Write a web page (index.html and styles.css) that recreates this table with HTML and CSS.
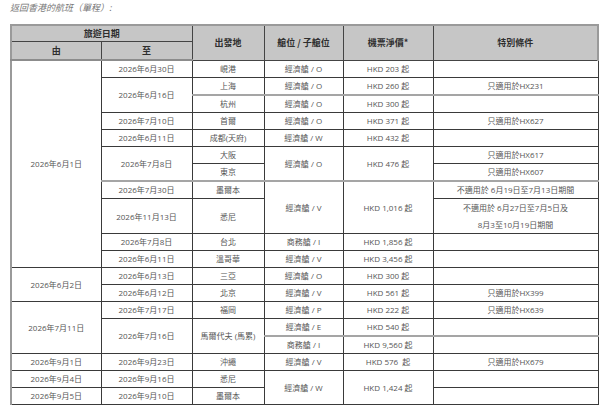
FILE: index.html
```html
<!DOCTYPE html>
<html lang="zh-Hant">
<head>
<meta charset="utf-8">
<title>返回香港的航班</title>
<link rel="stylesheet" href="styles.css">
</head>
<body>
<p class="title">返回香港的航班（單程）:</p>
<table class="fares">
  <colgroup>
    <col class="c1"><col class="c2"><col class="c3"><col class="c4"><col class="c5"><col class="c6">
  </colgroup>
  <thead>
    <tr class="h1">
      <th colspan="2">旅遊日期</th>
      <th rowspan="2">出發地</th>
      <th rowspan="2">艙位 / 子艙位</th>
      <th rowspan="2">機票淨價*</th>
      <th rowspan="2" class="last">特別條件</th>
    </tr>
    <tr class="h2">
      <th>由</th>
      <th>至</th>
    </tr>
  </thead>
  <tbody>
    <tr>
      <td rowspan="11" class="first">2026年6月1日</td>
      <td>2026年6月30日</td>
      <td>峴港</td>
      <td>經濟艙 / O</td>
      <td>HKD 203 起</td>
      <td></td>
    </tr>
    <tr>
      <td rowspan="2">2026年6月16日</td>
      <td>上海</td>
      <td>經濟艙 / O</td>
      <td>HKD 260 起</td>
      <td>只適用於HX231</td>
    </tr>
    <tr class="g">
      <td>杭州</td>
      <td>經濟艙 / O</td>
      <td>HKD 300 起</td>
      <td></td>
    </tr>
    <tr>
      <td>2026年7月10日</td>
      <td>首爾</td>
      <td>經濟艙 / O</td>
      <td>HKD 371 起</td>
      <td>只適用於HX627</td>
    </tr>
    <tr>
      <td>2026年6月11日</td>
      <td>成都(天府)</td>
      <td>經濟艙 / W</td>
      <td>HKD 432 起</td>
      <td></td>
    </tr>
    <tr>
      <td rowspan="2">2026年7月8日</td>
      <td>大阪</td>
      <td rowspan="2">經濟艙 / O</td>
      <td rowspan="2">HKD 476 起</td>
      <td>只適用於HX617</td>
    </tr>
    <tr>
      <td>東京</td>
      <td>只適用於HX607</td>
    </tr>
    <tr class="g">
      <td>2026年7月30日</td>
      <td>墨爾本</td>
      <td rowspan="2">經濟艙 / V</td>
      <td rowspan="2">HKD 1,016 起</td>
      <td>不適用於 6月19日至7月13日期間</td>
    </tr>
    <tr class="tall">
      <td>2026年11月13日</td>
      <td>悉尼</td>
      <td>不適用於 6月27日至7月5日及<br>8月3至10月19日期間</td>
    </tr>
    <tr>
      <td>2026年7月8日</td>
      <td>台北</td>
      <td>商務艙 / I</td>
      <td>HKD 1,856 起</td>
      <td></td>
    </tr>
    <tr>
      <td>2026年6月11日</td>
      <td>溫哥華</td>
      <td>經濟艙 / V</td>
      <td>HKD 3,456 起</td>
      <td></td>
    </tr>
    <tr>
      <td rowspan="2" class="first">2026年6月2日</td>
      <td>2026年6月13日</td>
      <td>三亞</td>
      <td>經濟艙 / O</td>
      <td>HKD 300 起</td>
      <td></td>
    </tr>
    <tr>
      <td>2026年6月12日</td>
      <td>北京</td>
      <td>經濟艙 / V</td>
      <td>HKD 561 起</td>
      <td>只適用於HX399</td>
    </tr>
    <tr>
      <td rowspan="3" class="first">2026年7月11日</td>
      <td>2026年7月17日</td>
      <td>福岡</td>
      <td>經濟艙 / P</td>
      <td>HKD 222 起</td>
      <td>只適用於HX639</td>
    </tr>
    <tr>
      <td rowspan="2">2026年7月16日</td>
      <td rowspan="2">馬爾代夫 (馬累)</td>
      <td>經濟艙 / E</td>
      <td>HKD 540 起</td>
      <td></td>
    </tr>
    <tr class="g">
      <td>商務艙 / I</td>
      <td>HKD 9,560 起</td>
      <td></td>
    </tr>
    <tr>
      <td class="first">2026年9月1日</td>
      <td>2026年9月23日</td>
      <td>沖繩</td>
      <td>經濟艙 / V</td>
      <td>HKD 576&nbsp; 起</td>
      <td>只適用於HX679</td>
    </tr>
    <tr>
      <td class="first">2026年9月4日</td>
      <td>2026年9月16日</td>
      <td>悉尼</td>
      <td rowspan="2">經濟艙 / W</td>
      <td rowspan="2">HKD 1,424 起</td>
      <td></td>
    </tr>
    <tr>
      <td class="first">2026年9月5日</td>
      <td>2026年9月10日</td>
      <td>墨爾本</td>
      <td></td>
    </tr>
  </tbody>
</table>
</body>
</html>
```

FILE: styles.css
```css
html, body {
  margin: 0;
  padding: 0;
  background: #ffffff;
}

body {
  padding: 0 3px 0 10px;
  font-family: "Open Sans", "Noto Sans CJK TC", sans-serif;
  color: #555555;
}

.title {
  margin: 0;
  height: 24px;
  line-height: 16px;
  font-size: 9px;
  font-style: italic;
  color: #777777;
  font-family: "Noto Sans CJK TC", sans-serif;
}

.fares {
  width: 587px;
  table-layout: fixed;
  border-collapse: collapse;
  font-size: 8px;
  text-align: center;
  font-family: "Open Sans", "Noto Sans CJK TC", sans-serif;
}

.c1 { width: 90px; }
.c2 { width: 91px; }
.c3 { width: 72px; }
.c4 { width: 79px; }
.c5 { width: 90px; }
.c6 { width: 165px; }

.fares th {
  background: #c6c6c6;
  color: #2e2e2e;
  font-weight: bold;
  font-size: 9px;
  font-family: "Noto Sans CJK TC", sans-serif;
  border: 1px solid #444444;
  padding: 0;
}

.fares .h1 th {
  border-top: 2px solid #9a9a9a;
  height: 15px;
}

.fares .h2 th {
  height: 17px;
  border-bottom: 2px solid #8c8c8c;
}

.fares th:first-child,
.fares td.first {
  border-left: 2px solid #9a9a9a;
}

.fares th.last {
  border-right: 2px solid #9a9a9a;
}

.fares td {
  border: 1px solid #3a3a3a;
  padding: 0;
  height: 16px;
  line-height: 16px;
  white-space: nowrap;
}

.fares tr.g td {
  border-top: 2px solid #a5a5a5;
}

.fares tr.tall td {
  height: 33px;
  line-height: 17px;
}
```
